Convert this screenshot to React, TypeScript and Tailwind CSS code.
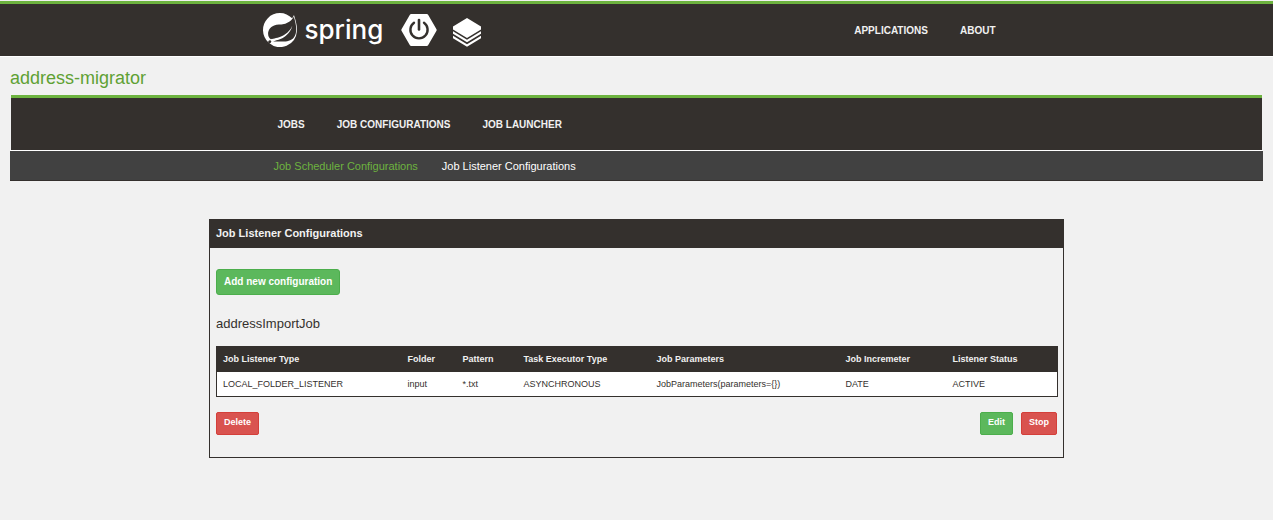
import { SiSpring } from "react-icons/si";

const topLinks = ["Applications", "About"];
const moduleLinks = ["Jobs", "Job Configurations", "Job Launcher"];

const columns = [
  { label: "Job Listener Type", value: "LOCAL_FOLDER_LISTENER", width: "w-[185px]" },
  { label: "Folder", value: "input", width: "w-[55px]" },
  { label: "Pattern", value: "*.txt", width: "w-[61px]" },
  { label: "Task Executor Type", value: "ASYNCHRONOUS", width: "w-[133px]" },
  { label: "Job Parameters", value: "JobParameters(parameters={})", width: "w-[189px]" },
  { label: "Job Incremeter", value: "DATE", width: "w-[107px]" },
  { label: "Listener Status", value: "ACTIVE", width: "w-[111px]" },
];

function NavLinks({ items }: { items: string[] }) {
  return (
    <ul className="flex pt-px">
      {items.map((item) => (
        <li key={item}>
          <a href="#" className="block px-4 text-[10px] leading-4 font-bold text-[#f1f1f1] uppercase">
            {item}
          </a>
        </li>
      ))}
    </ul>
  );
}

function BootIcon() {
  return (
    <svg viewBox="0 0 36 32" className="h-8 w-9" aria-hidden="true">
      <path
        d="M10.2 1.5h15.6L34.2 16l-8.4 14.5H10.2L1.8 16z"
        fill="#fff"
        stroke="#fff"
        strokeWidth="3"
        strokeLinejoin="round"
      />
      <path d="M13 8.8a8.600 8.600 0 1 0 10 0" fill="none" stroke="#34302d" strokeWidth="2.4" strokeLinecap="round" />
      <path d="M18 6v9.500" stroke="#34302d" strokeWidth="2.6" strokeLinecap="round" />
    </svg>
  );
}

function StackIcon() {
  return (
    <svg viewBox="0 0 28 29" className="h-[29px] w-7" fill="#fff" aria-hidden="true">
      <path d="M14 0l14 8.500v3L14 20 0 11.500v-3z" />
      <path d="M0 13.200l14 8.500 14-8.500v2.600l-14 8.500-14-8.500z" />
      <path d="M0 17.700l14 8.500 14-8.500v2.600l-14 8.500-14-8.500z" />
    </svg>
  );
}

export default function App() {
  return (
    <div className="min-h-screen bg-[#f1f1f1] pt-px font-['Liberation_Sans',Arial,sans-serif] text-[#34302d]">
      <header className="border-t-3 border-b border-t-[#6db33f] border-b-white bg-[#34302d]">
        <div className="mx-auto flex h-[52px] max-w-[750px] items-center justify-between">
          <a href="#" className="flex items-center pl-px text-white">
            <SiSpring className="size-[34px]" />
            <span className="pl-2 font-[Inter,sans-serif] text-[26px] leading-9 font-medium">spring</span>
            <span className="pl-[18px]">
              <BootIcon />
            </span>
            <span className="pt-1 pl-4">
              <StackIcon />
            </span>
          </a>
          <nav>
            <NavLinks items={topLinks} />
          </nav>
        </div>
      </header>

      <main className="px-[10px] pt-[9px]">
        <h1 className="text-[18px] leading-6 text-[#5fa134]">address-migrator</h1>

        <nav className="mx-px mt-[5px] border-t-3 border-[#6db33f] bg-[#34302d]">
          <div className="mx-auto flex h-[52px] max-w-[750px] items-center">
            <NavLinks items={moduleLinks} />
          </div>
        </nav>
        <nav className="border-t border-b border-t-white border-b-[#34302d] bg-[#414141]">
          <ul className="mx-auto flex h-[29px] max-w-[750px] items-center text-[11px] leading-4">
            <li>
              <a href="#" className="block px-3 text-[#6db33f]">
                Job Scheduler Configurations
              </a>
            </li>
            <li>
              <a href="#" className="block px-3 text-white">
                Job Listener Configurations
              </a>
            </li>
          </ul>
        </nav>

        <section className="mx-auto mt-[38px] max-w-[855px] border border-[#34302d]">
          <h2 className="bg-[#34302d] px-[6px] pt-[5px] pb-[7px] text-[11px] leading-4 font-bold text-[#f1f1f1]">
            Job Listener Configurations
          </h2>
          <div className="px-[6px] pt-5 pb-[22px]">
            <button
              type="button"
              className="h-[26px] rounded-[3px] border border-[#4cae4c] bg-[#5cb85c] px-[7px] text-[10px] font-bold text-white"
            >
              Add new configuration
            </button>
            <h3 className="mt-[21px] text-[13px] leading-4">addressImportJob</h3>
            <table className="mt-[14px] w-full table-fixed border-collapse border border-[#34302d] text-left text-[9px] leading-3">
              <thead>
                <tr className="h-[26px] bg-[#34302d] text-[#f1f1f1]">
                  {columns.map((c) => (
                    <th key={c.label} scope="col" className={`${c.width} px-[6px] font-bold`}>
                      {c.label}
                    </th>
                  ))}
                </tr>
              </thead>
              <tbody>
                <tr className="h-6 bg-white">
                  {columns.map((c) => (
                    <td key={c.label} className="px-[6px]">
                      {c.value}
                    </td>
                  ))}
                </tr>
              </tbody>
            </table>
            <div className="mt-[15px] flex gap-2 text-[9px] font-bold text-white">
              <button type="button" className="mr-auto h-[23px] rounded-[2px] border border-[#d43f3a] bg-[#d9534f] px-[7px]">
                Delete
              </button>
              <button type="button" className="h-[23px] rounded-[2px] border border-[#4cae4c] bg-[#5cb85c] px-[7px]">
                Edit
              </button>
              <button type="button" className="h-[23px] rounded-[2px] border border-[#d43f3a] bg-[#d9534f] px-[7px]">
                Stop
              </button>
            </div>
          </div>
        </section>
      </main>
    </div>
  );
}
